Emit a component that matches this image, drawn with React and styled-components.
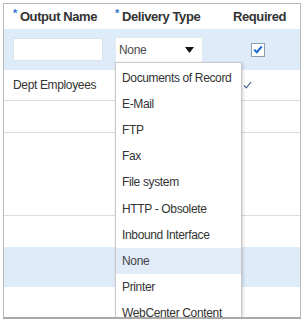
import React from 'react';
import styled, { createGlobalStyle } from 'styled-components';

const Global = createGlobalStyle`
  html, body { margin: 0; padding: 0; background: #fff; overflow: hidden; }
  body { font-family: "Liberation Sans", Arial, sans-serif; color: #333; }
`;

const Frame = styled.div`
  position: relative;
  margin: 3px 0 0 3px;
  width: 296px;
  height: 313px;
  border: 1px solid #b9b9b9;
  border-bottom: 2px solid #a9a9a9;
  overflow: hidden;
  background: #fff;
`;

const Row = styled.div`
  display: grid;
  grid-template-columns: 107px 120px 1fr;
  align-items: center;
  height: ${(p) => p.$h}px;
  box-sizing: border-box;
  background: ${(p) => (p.$selected ? '#deebf8' : '#fff')};
  border-bottom: ${(p) => (p.$line ? '1px solid #dcdcdc' : 'none')};
`;

const HeadCell = styled.div`
  display: flex;
  align-items: center;
  padding-left: ${(p) => p.$pad}px;
  font-size: 13px;
  font-weight: bold;
  letter-spacing: -0.4px;
  color: #333;
  white-space: nowrap;
`;

const Star = styled.span`
  align-self: flex-start;
  margin-top: -2px;
  margin-right: 3px;
  font-size: 11px;
  font-weight: bold;
  color: #2f79d0;
`;

const Cell = styled.div`
  display: flex;
  align-items: center;
  padding-left: ${(p) => p.$pad || 0}px;
  font-size: 12px;
  letter-spacing: -0.35px;
  color: #333;
  white-space: nowrap;
`;

const TextInput = styled.div`
  width: 90px;
  height: 23px;
  box-sizing: border-box;
  background: #fff;
  border: 1px solid #d9e1ea;
`;

const Select = styled.div`
  width: 88px;
  height: 26px;
  box-sizing: border-box;
  background: #fff;
  border: 1px solid #e3e9f0;
  display: flex;
  align-items: center;
  justify-content: space-between;
  padding: 0 8px 0 3px;
  font-size: 12px;
  letter-spacing: -0.3px;
  color: #4a4a4a;
`;

const CheckBox = styled.div`
  width: 12px;
  height: 12px;
  background: #fff;
  border: 1px solid #8f9cab;
  display: flex;
  align-items: center;
  justify-content: center;
`;

const Menu = styled.div`
  position: absolute;
  left: 111px;
  top: 58px;
  width: 127px;
  box-sizing: border-box;
  background: #fff;
  border: 1px solid #c9c9c9;
  box-shadow: 1px 1px 3px rgba(0, 0, 0, 0.18);
  padding-top: 2px;
  z-index: 2;
`;

const Item = styled.div`
  height: 26.1px;
  display: flex;
  align-items: center;
  padding-left: 6px;
  font-size: 12px;
  letter-spacing: -0.35px;
  color: ${(p) => (p.$active ? '#444' : '#333')};
  background: ${(p) => (p.$active ? '#e1ecf8' : '#fff')};
  white-space: nowrap;
`;

const items = [
  'Documents of Record',
  'E-Mail',
  'FTP',
  'Fax',
  'File system',
  'HTTP - Obsolete',
  'Inbound Interface',
  'None',
  'Printer',
  'WebCenter Content',
];

export default function App() {
  return (
    <>
      <Global />
      <Frame>
        <Row $h={25}>
          <HeadCell $pad={9}><Star>*</Star>Output Name</HeadCell>
          <HeadCell $pad={4}><Star>*</Star>Delivery Type</HeadCell>
          <HeadCell $pad={2}>Required</HeadCell>
        </Row>
        <Row $h={41} $selected>
          <Cell $pad={9}><TextInput /></Cell>
          <Cell $pad={4}>
            <Select>
              <span>None</span>
              <svg width="9" height="6" viewBox="0 0 9 6">
                <polygon points="0,0 9,0 4.5,6" fill="#111" />
              </svg>
            </Select>
          </Cell>
          <Cell $pad={20}>
            <CheckBox>
              <svg width="10" height="9" viewBox="0 0 10 9">
                <polyline points="1.2,4.6 3.8,7.2 8.8,1.4" fill="none" stroke="#1769c9" strokeWidth="2" />
              </svg>
            </CheckBox>
          </Cell>
        </Row>
        <Row $h={31} $line>
          <Cell $pad={9}>Dept Employees</Cell>
          <Cell />
          <Cell $pad={12}>
            <svg width="9" height="8" viewBox="0 0 9 8">
              <polyline points="1,4.4 3.3,6.8 8,1" fill="none" stroke="#44598a" strokeWidth="1.1" />
            </svg>
          </Cell>
        </Row>
        <Row $h={32} $line />
        <Row $h={83} $line />
        <Row $h={31} />
        <Row $h={40} $selected />
        <Row $h={30} />
        <Menu>
          {items.map((t) => (
            <Item key={t} $active={t === 'None'}>{t}</Item>
          ))}
        </Menu>
      </Frame>
    </>
  );
}
